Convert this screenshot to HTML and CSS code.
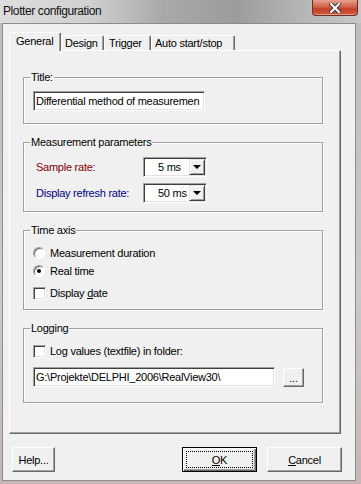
FILE: index.html
```html
<!DOCTYPE html>
<html lang="en">
<head>
  <meta charset="UTF-8">
  <title>Plotter configuration</title>
  <link rel="stylesheet" href="styles.css">
</head>
<body>

<div class="window">
  <div class="titlebar">
    <span class="caption">Plotter configuration</span>
    <div class="close-btn">
      <svg width="12" height="10" viewBox="0 0 12 10">
        <path d="M2 1 L10 9 M10 1 L2 9" stroke="#3a3a3a" stroke-width="4" stroke-linecap="square"/>
        <path d="M2 1 L10 9 M10 1 L2 9" stroke="#fff" stroke-width="2" stroke-linecap="square"/>
      </svg>
    </div>
  </div>

  <div class="client">
    <div class="tabs">
      <div class="tab active">General</div>
      <div class="tab w-design">Design</div>
      <div class="tab w-trigger">Trigger</div>
      <div class="tab w-auto">Auto start/stop</div>
    </div>

    <div class="panel">
      <fieldset class="group g-title">
        <legend>Title:</legend>
        <div class="edit w-title">Differential method of measuremen</div>
      </fieldset>

      <fieldset class="group g-measure">
        <legend>Measurement parameters</legend>
        <div class="param-grid">
          <label class="lbl-red">Sample rate:</label>
          <div class="combo"><span class="combo-text">5 ms</span><span class="combo-btn"><i class="arrow"></i></span></div>
          <label class="lbl-navy">Display refresh rate:</label>
          <div class="combo"><span class="combo-text">50 ms</span><span class="combo-btn"><i class="arrow"></i></span></div>
        </div>
      </fieldset>

      <fieldset class="group g-time">
        <legend>Time axis</legend>
        <div class="option"><span class="radio"></span><span>Measurement duration</span></div>
        <div class="option"><span class="radio checked"></span><span>Real time</span></div>
        <div class="option check-row"><span class="checkbox"></span><span>Display <u>d</u>ate</span></div>
      </fieldset>

      <fieldset class="group g-log">
        <legend>Logging</legend>
        <div class="option check-row"><span class="checkbox"></span><span>Log values (textfile) in folder:</span></div>
        <div class="folder-row">
          <div class="edit w-folder">G:\Projekte\DELPHI_2006\RealView30\</div>
          <button class="btn btn-small">...</button>
        </div>
      </fieldset>
    </div>

    <div class="buttons">
      <button class="btn btn-help">Help...</button>
      <div class="spacer"></div>
      <button class="btn btn-wide btn-default"><u>O</u>K</button>
      <button class="btn btn-wide"><u>C</u>ancel</button>
    </div>
  </div>
</div>

</body>
</html>
```

FILE: styles.css
```css
body {
  margin: 0;
  background: #c2c2c2;
  font-family: 'Liberation Sans', Arial, sans-serif;
  font-size: 11px;
  letter-spacing: -0.25px;
  color: #000;
}
.window {
  width: 361px;
  height: 484px;
  display: flex;
  flex-direction: column;
  background: linear-gradient(to bottom, #bdbdbd, #c9c9c9 60%, #c6b6b6);
  overflow: hidden;
}
.titlebar {
  height: 23px;
  display: flex;
  align-items: flex-start;
  background: linear-gradient(to right, #dedede 0%, #d0d0d0 25%, #a9a9a9 45%, #9c9c9c 65%, #b3b3b3 82%, #c8c8c8 100%);
}
.caption {
  font-size: 12px;
  letter-spacing: -0.4px;
  line-height: 23px;
  padding-left: 3px;
  color: #111;
  flex: 1;
}
.close-btn {
  width: 44px;
  height: 15px;
  margin-right: 3px;
  border: 1px solid #6e2e22;
  border-top: none;
  border-radius: 0 0 4px 4px;
  background: linear-gradient(to bottom, #e6a08f 0%, #d46a52 40%, #c3402a 60%, #cf5a3e 100%);
  box-shadow: inset 0 -1px 0 rgba(255, 255, 255, 0.4);
  display: flex;
  align-items: center;
  justify-content: center;
}
.client {
  flex: 1;
  margin: 0 5px 3px 2px;
  background: #f0f0f0;
  border: 1px solid #8c8c8c;
  padding-top: 8px;
}
.tabs {
  display: flex;
  align-items: flex-end;
  height: 18px;
  margin-left: 6px;
}
.tab {
  height: 15px;
  line-height: 14px;
  box-sizing: border-box;
  width: 42px;
  padding-left: 3px;
  border-top: 1px solid #fff;
  border-left: 1px solid #fff;
  border-right: 1px solid #696969;
  border-radius: 2px 2px 0 0;
  box-shadow: inset -1px 0 0 #a0a0a0;
  white-space: nowrap;
}
.tab.active {
  width: 52px;
  height: 19px;
  line-height: 17px;
  padding-left: 6px;
  margin-bottom: -1px;
  background: #f0f0f0;
  position: relative;
  z-index: 1;
}
.w-design { width: 43px; }
.w-trigger { width: 47px; padding-left: 4px; }
.w-auto { width: 84px; }
.panel {
  margin-left: 6px;
  width: 332px;
  height: 384px;
  box-sizing: border-box;
  border-top: 1px solid #fff;
  border-left: 1px solid #fff;
  border-right: 1px solid #696969;
  border-bottom: 1px solid #696969;
  box-shadow: inset -1px -1px 0 #a0a0a0;
  padding: 19px 0 0 13px;
}
.group {
  width: 300px;
  box-sizing: border-box;
  margin: 0 0 11px 0;
  border: 1px solid #a0a0a0;
  box-shadow: 1px 1px 0 #fff, inset 1px 1px 0 #fff;
  padding: 7px 9px 12px 9px;
}
.group legend {
  padding: 0 1px;
  margin-left: -3px;
  line-height: 14px;
}
.g-measure { padding-top: 8px; padding-bottom: 8px; }
.g-time { padding-top: 7px; padding-bottom: 7px; }
.g-log { padding-top: 7px; padding-bottom: 15px; }
.edit {
  height: 20px;
  box-sizing: border-box;
  background: #fff;
  border-top: 1px solid #a0a0a0;
  border-left: 1px solid #a0a0a0;
  border-right: 1px solid #fff;
  border-bottom: 1px solid #fff;
  box-shadow: inset 1px 1px 0 #404040, inset -1px -1px 0 #e3e3e3;
  padding: 0 0 0 2px;
  line-height: 18px;
  white-space: nowrap;
}
.w-title { width: 172px; }
.w-folder { width: 242px; }
.param-grid {
  display: grid;
  grid-template-columns: 110px 64px;
  row-gap: 6px;
  align-items: center;
}
.param-grid label {
  padding-left: 3px;
}
.lbl-red { color: #800000; }
.lbl-navy { color: #000080; }
.combo {
  height: 20px;
  box-sizing: border-box;
  display: flex;
  align-items: center;
  background: #fff;
  border-top: 1px solid #a0a0a0;
  border-left: 1px solid #a0a0a0;
  border-right: 1px solid #fff;
  border-bottom: 1px solid #fff;
  box-shadow: inset 1px 1px 0 #404040, inset -1px -1px 0 #e3e3e3;
  padding: 1px 1px 1px 14px;
}
.combo-text {
  flex: 1;
  white-space: nowrap;
}
.combo-btn {
  width: 16px;
  height: 16px;
  flex: none;
  box-sizing: border-box;
  background: #f0f0f0;
  border-top: 1px solid #e3e3e3;
  border-left: 1px solid #e3e3e3;
  border-right: 1px solid #404040;
  border-bottom: 1px solid #404040;
  box-shadow: inset 1px 1px 0 #fff, inset -1px -1px 0 #a0a0a0;
  display: flex;
  align-items: center;
  justify-content: center;
}
.arrow {
  width: 0;
  height: 0;
  border-left: 4px solid transparent;
  border-right: 4px solid transparent;
  border-top: 4px solid #000;
}
.option {
  height: 18px;
  display: flex;
  align-items: center;
  gap: 5px;
}
.option.check-row {
  gap: 4px;
}
.g-time .check-row {
  margin-top: 4px;
}
.radio {
  width: 12px;
  height: 12px;
  box-sizing: border-box;
  border-radius: 50%;
  border: 1px solid;
  border-color: #a0a0a0 #fff #fff #a0a0a0;
  box-shadow: inset 1px 1px 0 #696969;
  background: #fff;
  display: flex;
  align-items: center;
  justify-content: center;
}
.radio.checked::after {
  content: "";
  width: 4px;
  height: 4px;
  border-radius: 50%;
  background: #000;
}
.checkbox {
  width: 13px;
  height: 13px;
  box-sizing: border-box;
  background: #fff;
  border-top: 1px solid #a0a0a0;
  border-left: 1px solid #a0a0a0;
  border-right: 1px solid #fff;
  border-bottom: 1px solid #fff;
  box-shadow: inset 1px 1px 0 #404040, inset -1px -1px 0 #e3e3e3;
}
.folder-row {
  display: flex;
  align-items: flex-end;
  gap: 8px;
  margin-top: 7px;
}
.btn {
  font-family: 'Liberation Sans', Arial, sans-serif;
  font-size: 11px;
  letter-spacing: -0.25px;
  color: #000;
  background: #f0f0f0;
  box-sizing: border-box;
  height: 25px;
  padding: 0;
  border-top: 1px solid #fff;
  border-left: 1px solid #fff;
  border-right: 1px solid #696969;
  border-bottom: 1px solid #696969;
  box-shadow: inset -1px -1px 0 #a0a0a0;
  position: relative;
}
.btn-small {
  width: 21px;
  height: 19px;
  line-height: 14px;
}
.buttons {
  display: flex;
  margin-top: 13px;
  padding: 0 13px 0 9px;
  gap: 10px;
}
.spacer {
  flex: 1;
}
.btn-help { width: 43px; }
.btn-wide { width: 75px; }
.btn-default {
  border: 1px solid #000;
  box-shadow: inset 1px 1px 0 #fff, inset -1px -1px 0 #696969, inset -2px -2px 0 #a0a0a0;
}
.btn-default::after {
  content: "";
  position: absolute;
  top: 3px;
  left: 3px;
  right: 3px;
  bottom: 3px;
  border: 1px dotted #000;
}
```
